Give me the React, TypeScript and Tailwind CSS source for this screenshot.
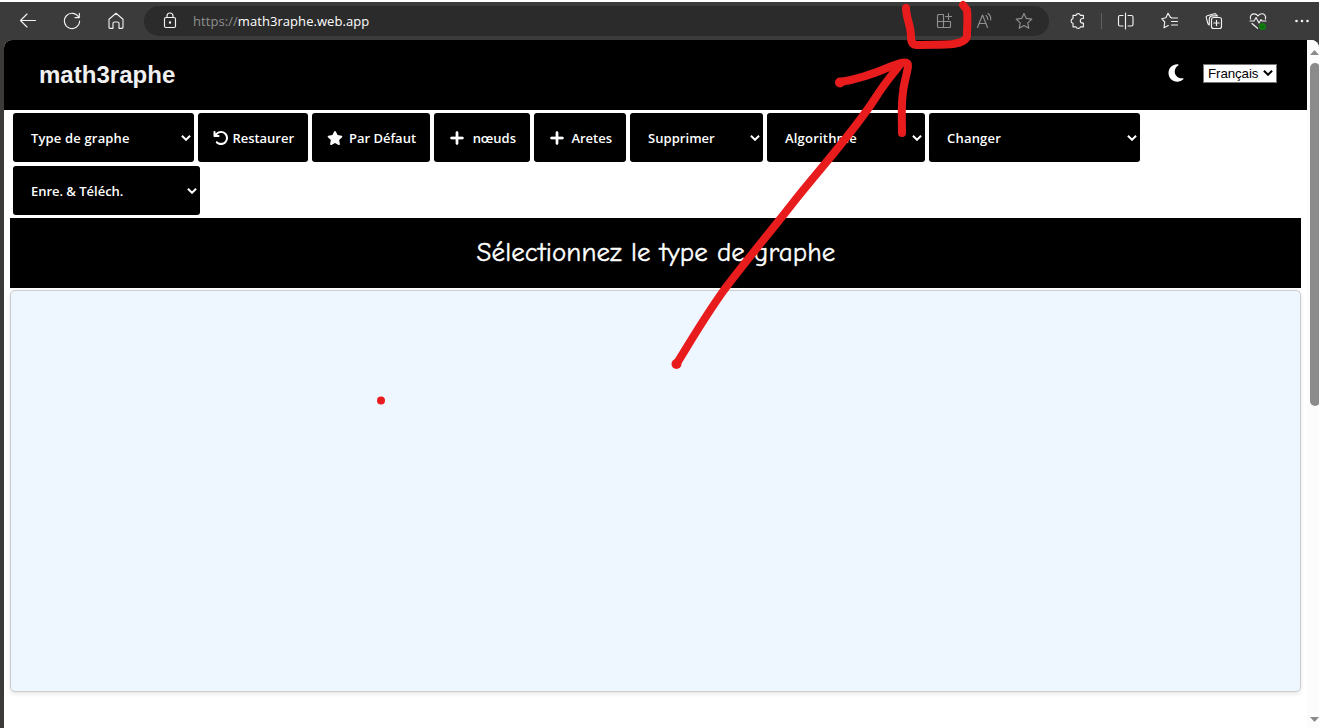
import React from "react";
import { FaArrowRotateLeft, FaMoon, FaPlus, FaStar } from "react-icons/fa6";

function Icon({ children, className = "text-[#f2f2f2]" }: { children: React.ReactNode; className?: string }) {
  return (
    <svg
      width="20"
      height="20"
      viewBox="0 0 20 20"
      fill="none"
      stroke="currentColor"
      strokeWidth="1.15"
      strokeLinecap="round"
      strokeLinejoin="round"
      className={`shrink-0 ${className}`}
    >
      {children}
    </svg>
  );
}

function BrowserBar() {
  return (
    <div className="flex h-[38px] shrink-0 items-center bg-[#3b3b3b] pl-[18px]">
      <div className="flex gap-6">
        <Icon>
          <path d="M17.5 9.5H2.5M9 3 2.5 9.5 9 16" />
        </Icon>
        <Icon>
          <path d="M16.8 6.5A7.6 7.6 0 1 0 17.6 10M17.3 2.3v4.3H13" />
        </Icon>
        <Icon>
          <path d="M3 8.2 10 2.3l7 5.9v8.1a1 1 0 0 1-1 1h-3v-4.8a1.5 1.5 0 0 0-1.5-1.5h-3A1.5 1.5 0 0 0 7 12.5v4.8H4a1 1 0 0 1-1-1Z" />
        </Icon>
      </div>
      <div className="ml-[18px] flex h-[30px] w-[905px] items-center rounded-full bg-[#2b2b2b] pl-4 pr-[15px]">
        <Icon>
          <rect x="4.5" y="6.5" width="11" height="10" rx="1.5" />
          <path d="M7 6.5V5a3 3 0 0 1 6 0v1.5" />
          <circle cx="10" cy="11.5" r=".6" fill="currentColor" />
        </Icon>
        <span className="ml-[13px] whitespace-nowrap font-['Open_Sans',sans-serif] text-[13px] leading-5 tracking-[0.06px] text-white">
          <span className="text-[#8f8f8f]">https://</span>math3raphe.web.app
        </span>
        <Icon className="ml-auto text-[#909090]">
          <path d="M9 3.500H4.500a1 1 0 0 0-1 1v11a1 1 0 0 0 1 1h11a1 1 0 0 0 1-1V10.500h-13M9.500 3.500v13M14.500 2.500v6M11.500 5.500h6" />
        </Icon>
        <Icon className="ml-[21px] text-[#909090]">
          <path d="M2.500 16.500 7.500 4l5 12.500M4.300 12.500h6.400M11 4.500a4.200 4.200 0 0 1 1.700 4M13 2.500a6.500 6.500 0 0 1 2.600 6.500" />
        </Icon>
        <Icon className="ml-[19px] text-[#909090]">
          <path d="m10 2.400 2.300 5 5.500.7-4 3.800 1 5.400-4.800-2.700-4.800 2.700 1-5.400-4-3.800 5.500-.7Z" />
        </Icon>
      </div>
      <Icon className="ml-[18px] text-[#f2f2f2]">
        <path d="M6 4.300h3a2.300 2.300 0 0 1 4.400 0h3v3.200h-.8a2.300 2.300 0 0 0 0 4.600h.8v3.700h-3a2.300 2.300 0 0 1-4.400 0H6v-3.500a2.400 2.400 0 0 1 0-4.700Z" />
      </Icon>
      <div className="ml-[14px] h-4 w-px bg-[#606060]" />
      <div className="ml-[14px] flex gap-6">
        <Icon>
          <path d="M7 4.500H4A1.500 1.500 0 0 0 2.500 6v7.500A1.500 1.500 0 0 0 4 15h3M12 4.500h3.500A1.500 1.500 0 0 1 17 6v7.500a1.500 1.500 0 0 1-1.500 1.500H12M9.500 2v16" />
        </Icon>
        <Icon>
          <path d="m11.300 6.500-.8-.1-2.500-4.200L5.900 6.800l-4.200.9 3 3.300-.7 5.800 4.300-2.300M11.500 7h6M11.500 10.500h6M11.500 14h6" />
        </Icon>
        <Icon>
          <rect x="7.500" y="6.500" width="10" height="11" rx="2" />
          <path d="M12.500 9.300v5.400M9.800 12h5.400M5.200 14 4 12.800 2.200 6.700a1.600 1.600 0 0 1 1.100-2L10.400 2.700a1.600 1.600 0 0 1 1.900 1.200M5.300 13.500V8a3.200 3.200 0 0 1 3.200-3.200h5.200" />
        </Icon>
        <Icon>
          <path d="M2.600 8C1.500 4.500 4 2.800 6.200 2.800c1.800 0 2.900.9 3.800 2.200.9-1.300 2-2.200 3.800-2.200C16 2.800 18.500 4.500 17.400 8M2 10h4l2-3.500L11 12l2-3.500 1 1.500h4M4 12.500l5.500 4.800" />
          <circle cx="14.5" cy="15.500" r="3.600" fill="#107c10" stroke="none" />
          <path d="m13.200 15.600 1 1 1.700-1.900" stroke="#0a5a0a" strokeWidth=".9" />
        </Icon>
        <Icon>
          <g fill="currentColor" stroke="none">
            <circle cx="4.500" cy="10" r="1.300" />
            <circle cx="10" cy="10" r="1.300" />
            <circle cx="15.500" cy="10" r="1.300" />
          </g>
        </Icon>
      </div>
    </div>
  );
}

function Chevron({ className = "" }: { className?: string }) {
  return (
    <svg width="10" height="6" viewBox="0 0 10 6" fill="none" stroke="currentColor" strokeWidth="2" className={`shrink-0 ${className}`}>
      <path d="m.9.800 4.100 4 4.100-4" />
    </svg>
  );
}

const box =
  "flex h-[49px] items-center rounded-[3px] bg-black text-white font-['Open_Sans',sans-serif] text-[13px] font-[650] whitespace-nowrap";

function Select({ label, width, tracking = "tracking-[0.050px]" }: { label: string; width: string; tracking?: string }) {
  return (
    <button className={`${box} ${width} justify-between pl-[18px] pr-[3px]`}>
      <span className={`pt-0.5 ${tracking}`}>{label}</span>
      <Chevron />
    </button>
  );
}

function Action({ label, width, icon }: { label: string; width: string; icon: React.ReactNode }) {
  return (
    <button className={`${box} ${width} justify-between pl-[15px] pr-[14px]`}>
      {icon}
      <span className="pt-0.5 tracking-[-0.020px]">{label}</span>
    </button>
  );
}

function Annotations() {
  return (
    <svg
      className="pointer-events-none absolute left-0 top-0"
      width="1319"
      height="728"
      viewBox="0 0 1319 728"
      fill="none"
      stroke="#e81c1c"
      strokeWidth="8"
      strokeLinecap="round"
      strokeLinejoin="round"
    >
      <path d="M906 8C906 18 911 25 911 37Q911 45 917 45C931 44.500 944 45 953 44Q966 42 967 36C967 27 968 18 967 10L963 5" />
      <path d="M676.500 364C692 339 704 318 724 290C748 258 772 230 796 199C825 163 855 130 876 97C884 84 891 76 899 66" />
      <path d="M840 82C861 79 878 72 892 66Q909 59 908 66C907 75 904 82 903 92C901 105 902 119 902 133" />
      <g fill="#e81c1c" stroke="none">
        <circle cx="676.500" cy="364" r="5" />
        <circle cx="840" cy="82.500" r="5" />
        <circle cx="381" cy="400.500" r="4" />
      </g>
    </svg>
  );
}

export default function App() {
  return (
    <div className="relative flex h-[728px] w-[1319px] flex-col overflow-hidden bg-white pt-0.5">
      <BrowserBar />
      <div className="flex min-h-0 flex-1 bg-[#3b3a38] pl-1">
        <div className="flex min-w-0 flex-1 overflow-hidden rounded-tl-[8px] rounded-tr-[8px] bg-white">
          <main className="w-[1303px] shrink-0">
            <header className="flex h-[70px] items-center bg-black pl-[35px] pr-[30px]">
              <h1 className="font-['Liberation_Sans',sans-serif] text-2xl font-bold leading-7 tracking-[0.020px] text-[#f0f0f0]">
                math3raphe
              </h1>
              <FaMoon className="-mt-1 ml-auto h-5 w-5 text-white" />
              <button className="-mt-[3px] ml-[17px] flex h-[19px] w-[74px] items-center justify-between whitespace-nowrap border border-[#767676] bg-white pl-1 pr-[3px] font-['Liberation_Sans',sans-serif] text-[13.333px] leading-4 text-black">
                <span className="tracking-[-0.100px]">Français</span>
                <Chevron className="-mt-0.5" />
              </button>
            </header>
            <div className="flex flex-wrap gap-1 py-[3px] pl-[9px] pr-[100px]">
              <Select label="Type de graphe" width="w-[181px]" tracking="tracking-[0.160px]" />
              <Action label="Restaurer" width="w-[110px]" icon={<FaArrowRotateLeft size={16} />} />
              <Action label="Par Défaut" width="w-[118px]" icon={<FaStar size={16} />} />
              <Action label="nœuds" width="w-[96px]" icon={<FaPlus size={16} stroke="currentColor" strokeWidth={24} />} />
              <Action label="Aretes" width="w-[92px]" icon={<FaPlus size={16} stroke="currentColor" strokeWidth={24} />} />
              <Select label="Supprimer" width="w-[133px]" />
              <Select label="Algorithme" width="w-[158px]" tracking="tracking-[0.200px]" />
              <Select label="Changer" width="w-[211px]" tracking="tracking-[0.200px]" />
              <Select label="Enre. & Téléch." width="w-[187px]" tracking="tracking-[-0.030px]" />
            </div>
            <div className="mx-1.5 flex h-[70px] items-center justify-center bg-black">
              <h2 className="whitespace-nowrap pl-px font-['Comic_Sans_MS','Comic_Neue','Noto_Sans',sans-serif] text-[27px] leading-8 tracking-[0.100px] text-white [-webkit-text-stroke:0.4px_white]">
                Sélectionnez le type de graphe
              </h2>
            </div>
            <div className="mx-1.5 mt-0.5 h-[402px] rounded-[5px] border border-[#ccc] bg-[#eef6ff] shadow-[0_2px_4px_rgba(0,0,0,0.1)]" />
          </main>
          <div className="flex w-3 shrink-0 flex-col justify-between overflow-hidden bg-[#fcfcfc] pb-[6px] pl-[3px] pt-[10px]">
            <div>
              <svg width="9" height="5" viewBox="0 0 9 5" fill="#8b8b8b">
                <path d="M0 5 4.500 0 9 5Z" />
              </svg>
              <div className="mt-2 h-[343px] w-[10px] rounded-full bg-[#8b8b8b]" />
            </div>
            <svg width="9" height="5" viewBox="0 0 9 5" fill="#8b8b8b">
              <path d="M0 0h9L4.500 5Z" />
            </svg>
          </div>
        </div>
      </div>
      <Annotations />
    </div>
  );
}
